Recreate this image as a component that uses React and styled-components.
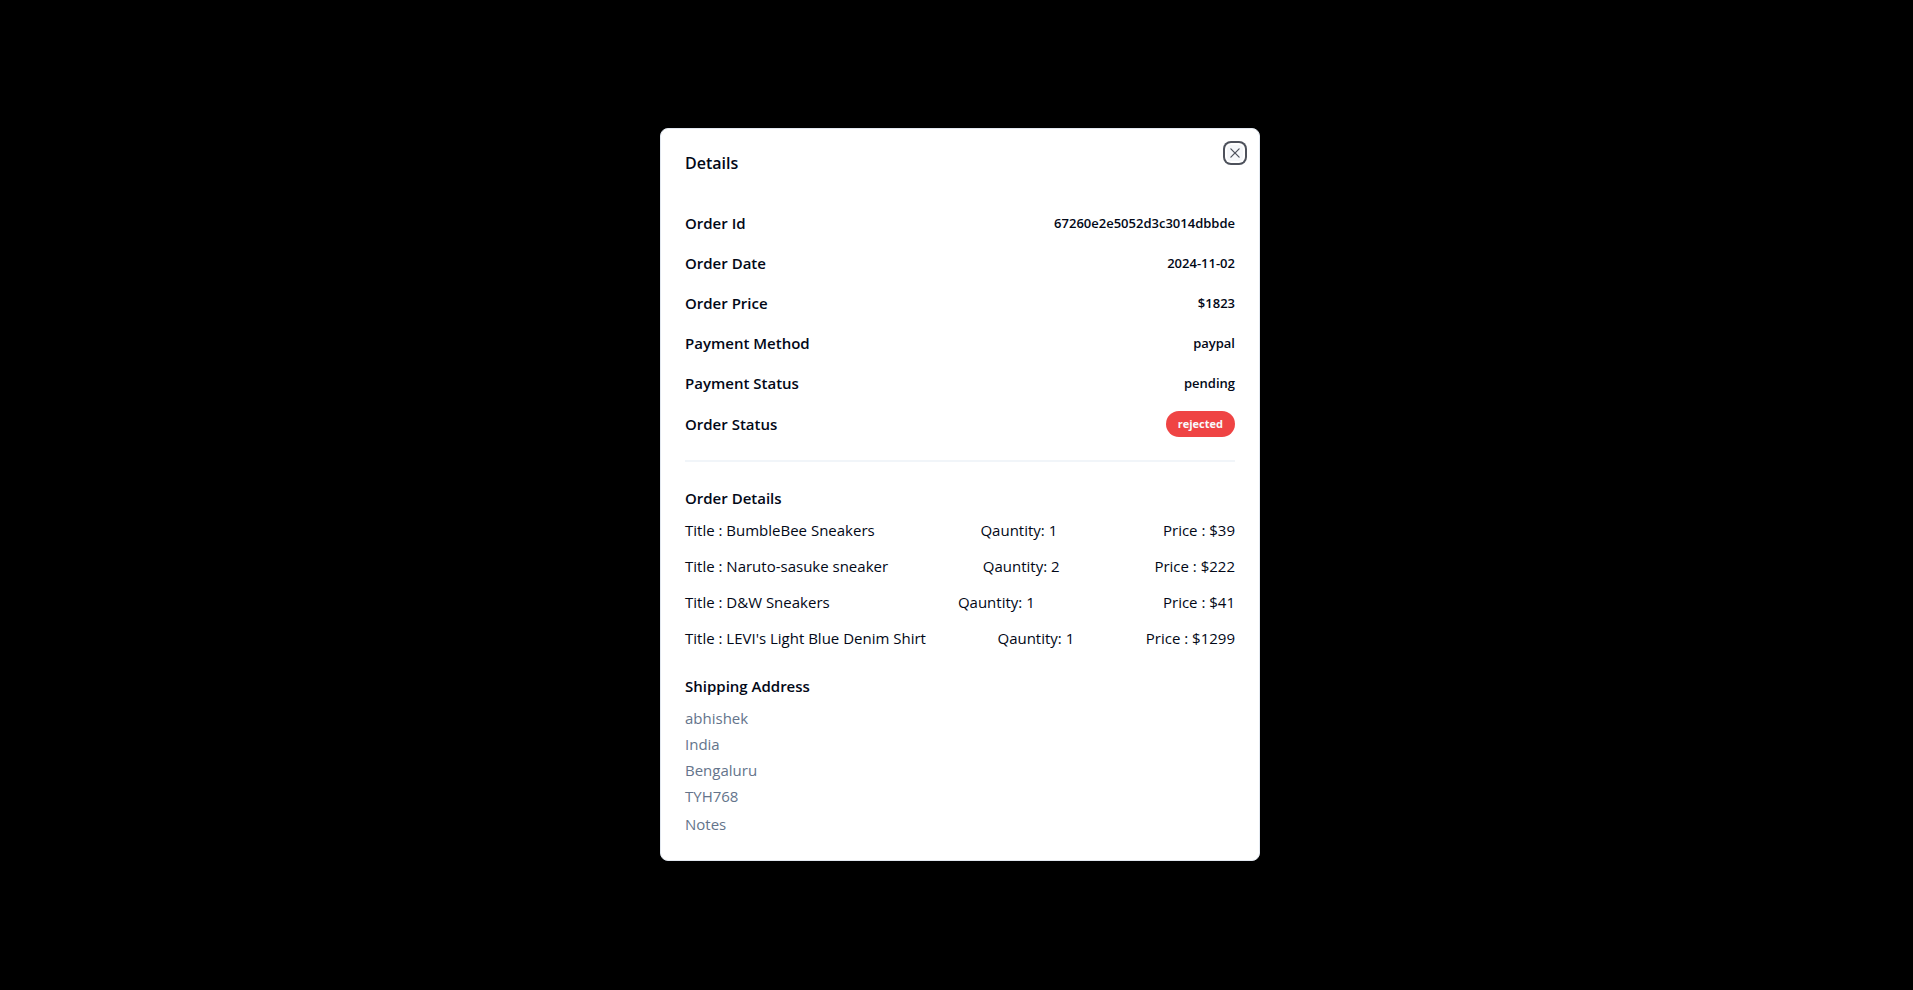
import React from "react";
import styled, { createGlobalStyle, css } from "styled-components";

const GlobalStyle = createGlobalStyle`
  *, *::before, *::after { box-sizing: border-box; }
  body {
    margin: 0;
    background: #000;
    color: #020817;
    font-family: "Segoe UI", "Open Sans", "Noto Sans", sans-serif;
    font-size: 15px;
    line-height: 24px;
  }
  h2, h3, p, dl, dd, dt, ul { margin: 0; padding: 0; }
`;

const Overlay = styled.div`
  display: flex;
  align-items: center;
  justify-content: center;
  min-height: 100vh;
  padding: 0 0 2px 7px;
  background: #000;
`;

const Dialog = styled.section`
  position: relative;
  width: 100%;
  max-width: 600px;
  padding: 24px;
  border: 1px solid #e2e8f0;
  border-radius: 8px;
  background: #fff;
`;

const Title = styled.h2`
  margin-bottom: 38px;
  font-size: 16px;
  line-height: 20px;
  font-weight: 600;
`;

const CloseButton = styled.button`
  position: absolute;
  top: 16px;
  right: 16px;
  display: flex;
  width: 16px;
  height: 16px;
  padding: 0;
  border: 0;
  border-radius: 4px;
  background: #f1f5f9;
  color: #020817;
  opacity: 0.7;
  outline: none;
  cursor: pointer;
  box-shadow: 0 0 0 2px #fff, 0 0 0 4px #020817;
`;

const Summary = styled.dl`
  display: flex;
  flex-direction: column;
  gap: 16px;
  padding-bottom: 23px;
  border-bottom: 2px solid #f1f5f9;
`;

const SummaryRow = styled.div`
  display: flex;
  align-items: center;
  justify-content: space-between;
  font-weight: 600;
`;

const SummaryValue = styled.dd`
  font-size: 13px;
`;

const Badge = styled.span`
  display: block;
  padding: 4px 12px;
  border-radius: 13px;
  background: #ef4444;
  color: #f8fafc;
  font-size: 11px;
  line-height: 18px;
  font-weight: 700;
`;

const Section = styled.section`
  margin-top: 24px;
`;

const SectionTitle = styled.h3`
  margin-bottom: 8px;
  font-size: 15px;
  font-weight: 600;
`;

const List = styled.ul`
  display: flex;
  flex-direction: column;
  gap: 12px;
  list-style: none;
  ${(p) =>
    p.$muted &&
    css`
      gap: 2px;
      color: #64748b;
    `}
`;

const ItemRow = styled.li`
  display: flex;
  align-items: center;
  justify-content: space-between;
`;

const Notes = styled.p`
  margin-top: 4px;
  color: #64748b;
`;

const summary = [
  ["Order Id", "67260e2e5052d3c3014dbbde"],
  ["Order Date", "2024-11-02"],
  ["Order Price", "$1823"],
  ["Payment Method", "paypal"],
  ["Payment Status", "pending"],
];

const items = [
  { title: "BumbleBee Sneakers", quantity: 1, price: 39 },
  { title: "Naruto-sasuke sneaker", quantity: 2, price: 222 },
  { title: "D&W Sneakers", quantity: 1, price: 41 },
  { title: "LEVI's Light Blue Denim Shirt", quantity: 1, price: 1299 },
];

const address = ["abhishek", "India", "Bengaluru", "TYH768"];

function CrossIcon() {
  return (
    <svg width="16" height="16" viewBox="0 0 15 15" fill="none" aria-hidden="true">
      <path
        d="M11.7816 4.03157C12.0062 3.80702 12.0062 3.44295 11.7816 3.2184C11.5571 2.99385 11.193 2.99385 10.9685 3.2184L7.50005 6.68682L4.03164 3.2184C3.80708 2.99385 3.44301 2.99385 3.21846 3.2184C2.99391 3.44295 2.99391 3.80702 3.21846 4.03157L6.68688 7.49999L3.21846 10.9684C2.99391 11.193 2.99391 11.557 3.21846 11.7816C3.44301 12.0061 3.80708 12.0061 4.03164 11.7816L7.50005 8.31316L10.9685 11.7816C11.193 12.0061 11.5571 12.0061 11.7816 11.7816C12.0062 11.557 12.0062 11.193 11.7816 10.9684L8.31322 7.49999L11.7816 4.03157Z"
        fill="currentColor"
        fillRule="evenodd"
        clipRule="evenodd"
      />
    </svg>
  );
}

export default function App() {
  return (
    <>
      <GlobalStyle />
      <Overlay>
        <Dialog role="dialog" aria-modal="true" aria-labelledby="details-title">
          <Title id="details-title">Details</Title>
          <Summary>
            {summary.map(([label, value]) => (
              <SummaryRow key={label}>
                <dt>{label}</dt>
                <SummaryValue>{value}</SummaryValue>
              </SummaryRow>
            ))}
            <SummaryRow>
              <dt>Order Status</dt>
              <SummaryValue>
                <Badge>rejected</Badge>
              </SummaryValue>
            </SummaryRow>
          </Summary>
          <Section>
            <SectionTitle>Order Details</SectionTitle>
            <List>
              {items.map((item) => (
                <ItemRow key={item.title}>
                  <span>{`Title : ${item.title}`}</span>
                  <span>{`Qauntity: ${item.quantity}`}</span>
                  <span>{`Price : $${item.price}`}</span>
                </ItemRow>
              ))}
            </List>
          </Section>
          <Section>
            <SectionTitle>Shipping Address</SectionTitle>
            <List $muted>
              {address.map((line) => (
                <li key={line}>{line}</li>
              ))}
            </List>
            <Notes>Notes</Notes>
          </Section>
          <CloseButton type="button" aria-label="Close">
            <CrossIcon />
          </CloseButton>
        </Dialog>
      </Overlay>
    </>
  );
}
